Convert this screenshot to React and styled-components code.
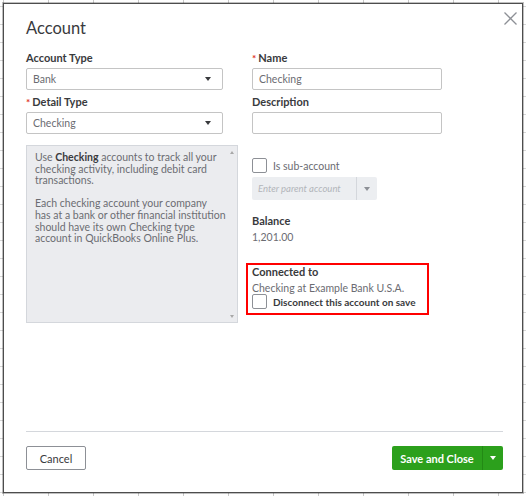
import React from 'react';
import styled, { createGlobalStyle } from 'styled-components';

const GlobalStyle = createGlobalStyle`
  html, body {
    margin: 0;
    padding: 0;
  }
  body {
    width: 526px;
    height: 496px;
    overflow: hidden;
    font-family: Lato, 'Open Sans', sans-serif;
    color: #393a3d;
    background-color: #fff;
    background-image:
      linear-gradient(to right, #c9c9c9 1px, transparent 1px),
      linear-gradient(to bottom, #d6d6d6 1px, transparent 1px);
    background-size: 45px 18px;
    background-position: 3px 6px;
  }
  #root {
    padding: 3px;
  }
`;

const Modal = styled.div`
  box-sizing: border-box;
  width: 520px;
  height: 490px;
  background: #fff;
  border: 1px solid #4d4d4d;
  box-shadow: 0 0 0 1px rgba(0, 0, 0, 0.25);
  display: flex;
  flex-direction: column;
  padding: 0 19px 0 22px;
`;

const Header = styled.div`
  display: flex;
  justify-content: space-between;
  align-items: flex-start;
  padding-top: 14px;
  height: 47px;
  box-sizing: border-box;
`;

const Title = styled.h1`
  margin: 0;
  font-size: 16.5px;
  line-height: 20px;
  font-weight: 400;
  color: #393a3d;
`;

const CloseButton = styled.button`
  border: 0;
  background: none;
  padding: 0;
  margin: -7px -14px 0 0;
  width: 14px;
  height: 14px;
  color: #8d9096;
  cursor: pointer;
  display: flex;
  align-items: center;
  justify-content: center;
`;

const Body = styled.div`
  flex: 1;
  display: grid;
  grid-template-columns: 212px 1fr;
  align-items: start;
  column-gap: 14px;
`;

const Column = styled.div`
  display: flex;
  flex-direction: column;
  align-items: flex-start;
`;

const Label = styled.div`
  font-size: 11px;
  line-height: 14px;
  font-weight: 700;
  color: #393a3d;
  margin: ${(p) => p.$top || 0}px 0 3px;
`;

const Required = styled.span`
  color: #e0301e;
  font-size: 10px;
  margin-right: 2px;
`;

const Select = styled.div`
  box-sizing: border-box;
  width: 197px;
  height: 22px;
  border: 1px solid #c4c4c4;
  border-radius: 2px;
  display: flex;
  align-items: center;
  justify-content: space-between;
  padding: 0 11px 0 6px;
  font-size: 10.5px;
  color: #6b6c72;
  background: #fff;
`;

const Caret = styled.span`
  width: 0;
  height: 0;
  border-left: 3.5px solid transparent;
  border-right: 3.5px solid transparent;
  border-top: 4px solid ${(p) => p.$color || '#393a3d'};
`;

const HelpBox = styled.div`
  box-sizing: border-box;
  margin-top: 11px;
  width: 212px;
  height: 178px;
  background: #ebecef;
  border: 1px solid #d4d7dc;
  display: flex;
`;

const HelpText = styled.div`
  flex: 1;
  padding: 6px 0 0 8px;
  font-size: 10.5px;
  line-height: 11.6px;
  color: #6b6c72;
  white-space: nowrap;
  p {
    margin: 0 0 11.6px;
  }
  b {
    color: #393a3d;
    font-weight: 700;
  }
`;

const ScrollTrack = styled.div`
  width: 10px;
  display: flex;
  flex-direction: column;
  justify-content: space-between;
  align-items: center;
  padding: 5px 0 4px;
`;

const ScrollArrow = styled.span`
  width: 0;
  height: 0;
  border-left: 2.5px solid transparent;
  border-right: 2.5px solid transparent;
  ${(p) => (p.$up ? 'border-bottom' : 'border-top')}: 3px solid #a8a8a8;
`;

const TextInput = styled.div`
  box-sizing: border-box;
  width: 190px;
  height: 22px;
  border: 1px solid #c4c4c4;
  border-radius: 2px;
  display: flex;
  align-items: center;
  padding: 0 6px;
  font-size: 10.5px;
  color: #6b6c72;
`;

const CheckRow = styled.div`
  display: flex;
  align-items: center;
  gap: 6px;
  height: 15px;
  margin-top: ${(p) => p.$top || 0}px;
  white-space: nowrap;
  font-size: ${(p) => (p.$strong ? 10 : 10.5)}px;
  font-weight: ${(p) => (p.$strong ? 700 : 400)};
  color: ${(p) => (p.$strong ? '#393a3d' : '#6b6c72')};
`;

const Box = styled.span`
  box-sizing: border-box;
  flex: none;
  width: 15px;
  height: 15px;
  border: 1px solid #8d9096;
  border-radius: 2px;
  background: #fff;
`;

const Combo = styled.div`
  box-sizing: border-box;
  margin-top: 4px;
  width: 125px;
  height: 23px;
  background: #eceef1;
  border-radius: 2px;
  display: flex;
  align-items: stretch;
`;

const ComboInput = styled.div`
  flex: 1;
  display: flex;
  align-items: center;
  padding-left: 6px;
  font-size: 9.5px;
  font-style: italic;
  color: #b2b5ba;
  border-right: 1px solid #d4d7dc;
`;

const ComboButton = styled.div`
  width: 20px;
  display: flex;
  align-items: center;
  justify-content: center;
`;

const Value = styled.div`
  font-size: 10.5px;
  line-height: 12px;
  color: #6b6c72;
`;

const Highlight = styled.div`
  box-sizing: border-box;
  margin: 20px 0 0 -6px;
  width: 183px;
  height: 52px;
  border: 2px solid #ff0000;
  padding: 0 4px;
  display: flex;
  flex-direction: column;
`;

const Footer = styled.div`
  border-top: 1px solid #d4d7dc;
  height: 60px;
  display: flex;
  justify-content: space-between;
  align-items: flex-start;
  padding-top: 14px;
  box-sizing: border-box;
  margin-bottom: 1px;
`;

const SecondaryButton = styled.button`
  box-sizing: border-box;
  width: 60px;
  height: 24px;
  background: #fff;
  border: 1px solid #8d9096;
  border-radius: 2px;
  font-family: inherit;
  font-size: 11px;
  color: #393a3d;
`;

const SplitButton = styled.div`
  display: flex;
  height: 24px;
  border-radius: 2px;
  overflow: hidden;
  background: #2ca01c;
  color: #fff;
`;

const PrimaryButton = styled.button`
  border: 0;
  background: transparent;
  color: inherit;
  font-family: inherit;
  font-weight: 700;
  font-size: 11px;
  width: 91px;
  padding: 0;
  border-right: 1px solid #238a15;
`;

const MenuButton = styled.button`
  border: 0;
  background: transparent;
  width: 20px;
  padding: 0;
  display: flex;
  align-items: center;
  justify-content: center;
`;

export default function App() {
  return (
    <>
      <GlobalStyle />
      <Modal>
        <Header>
          <Title>Account</Title>
          <CloseButton aria-label="Close">
            <svg width="13" height="13" viewBox="0 0 13 13">
              <path d="M0.5 0.5 L12.5 12.5 M12.5 0.5 L0.5 12.5" stroke="currentColor" strokeWidth="1.3" />
            </svg>
          </CloseButton>
        </Header>

        <Body>
          <Column>
            <Label>Account Type</Label>
            <Select>
              Bank
              <Caret />
            </Select>
            <Label $top={5}>
              <Required>*</Required>Detail Type
            </Label>
            <Select>
              Checking
              <Caret />
            </Select>
            <HelpBox>
              <HelpText>
                <p>
                  Use <b>Checking</b> accounts to track all your
                  <br />
                  checking activity, including debit card
                  <br />
                  transactions.
                </p>
                <p>
                  Each checking account your company
                  <br />
                  has at a bank or other financial institution
                  <br />
                  should have its own Checking type
                  <br />
                  account in QuickBooks Online Plus.
                </p>
              </HelpText>
              <ScrollTrack>
                <ScrollArrow $up />
                <ScrollArrow />
              </ScrollTrack>
            </HelpBox>
          </Column>

          <Column>
            <Label>
              <Required>*</Required>Name
            </Label>
            <TextInput>Checking</TextInput>
            <Label $top={5}>Description</Label>
            <TextInput />

            <CheckRow $top={24}>
              <Box />
              Is sub-account
            </CheckRow>
            <Combo>
              <ComboInput>Enter parent account</ComboInput>
              <ComboButton>
                <Caret $color="#8d9096" />
              </ComboButton>
            </Combo>

            <Label $top={14}>Balance</Label>
            <Value>1,201.00</Value>

            <Highlight>
              <Label>Connected to</Label>
              <Value>Checking at Example Bank U.S.A.</Value>
              <CheckRow $strong>
                <Box />
                Disconnect this account on save
              </CheckRow>
            </Highlight>
          </Column>
        </Body>

        <Footer>
          <SecondaryButton>Cancel</SecondaryButton>
          <SplitButton>
            <PrimaryButton>Save and Close</PrimaryButton>
            <MenuButton aria-label="More options">
              <Caret $color="#fff" />
            </MenuButton>
          </SplitButton>
        </Footer>
      </Modal>
    </>
  );
}
